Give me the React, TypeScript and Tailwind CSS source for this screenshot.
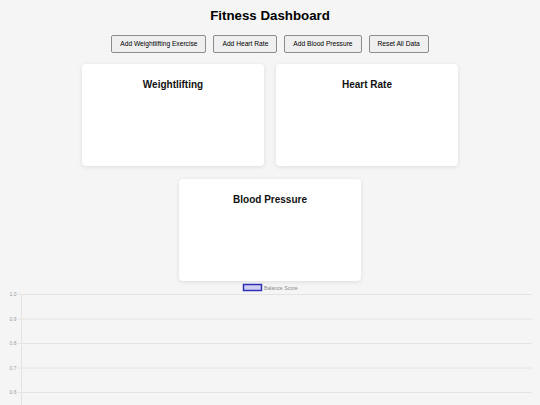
const buttons = [
  'Add Weightlifting Exercise',
  'Add Heart Rate',
  'Add Blood Pressure',
  'Reset All Data',
];

const cards = ['Weightlifting', 'Heart Rate', 'Blood Pressure'];

// y-axis ticks of the balance chart, top to bottom (the rest is below the fold)
const ticks = ['1.0', '0.9', '0.8', '0.7', '0.6'];

function BalanceChart() {
  const top = 13;
  const step = 24.5;
  return (
    <svg width={540} height={124} className="block">
      {/* legend */}
      <rect x={243.5} y={3.5} width={18} height={6} fill="rgba(54,54,235,0.2)" stroke="#2f2fb8" strokeWidth={1.5} />
      <text x={264} y={8.5} fontSize={5.2} fill="#8a8a8a" fontFamily="Liberation Sans, Arial, sans-serif">
        Balance Score
      </text>

      {/* grid + labels */}
      {ticks.map((t, i) => {
        const y = top + i * step + 0.5;
        return (
          <g key={t}>
            <line x1={18} x2={532} y1={y} y2={y} stroke="#e4e4e4" strokeWidth={1} />
            <text
              x={16.5}
              y={y + 1.8}
              fontSize={5}
              textAnchor="end"
              fill="#9a9a9a"
              fontFamily="Liberation Sans, Arial, sans-serif"
            >
              {t}
            </text>
          </g>
        );
      })}
      <line x1={21.5} x2={21.5} y1={top} y2={124} stroke="#e4e4e4" strokeWidth={1} />
    </svg>
  );
}

export default function App() {
  return (
    <div className="min-h-screen bg-[#f5f5f5] font-['Liberation_Sans',Arial,sans-serif] text-black">
      <h1 className="pt-[8px] text-center text-[13.3px] font-bold leading-[16px]">Fitness Dashboard</h1>

      <div className="mt-[11px] flex justify-center gap-[7px]">
        {buttons.map((b) => (
          <button
            key={b}
            className="h-[18px] rounded-[2px] border border-[#8c8c8c] bg-[#efefef] px-[8px] text-[6.67px] leading-none text-black"
          >
            {b}
          </button>
        ))}
      </div>

      <div className="mx-auto mt-[11px] flex w-[400px] flex-wrap justify-center gap-x-[12px] gap-y-[13px]">
        {cards.map((c) => (
          <div
            key={c}
            className="h-[102px] w-[182px] rounded-[4px] bg-white pt-[15px] text-center shadow-[0_1px_4px_rgba(0,0,0,0.1)]"
          >
            <h2 className="text-[10px] font-bold leading-[12px] text-[#111]">{c}</h2>
          </div>
        ))}
      </div>

      <BalanceChart />
    </div>
  );
}
